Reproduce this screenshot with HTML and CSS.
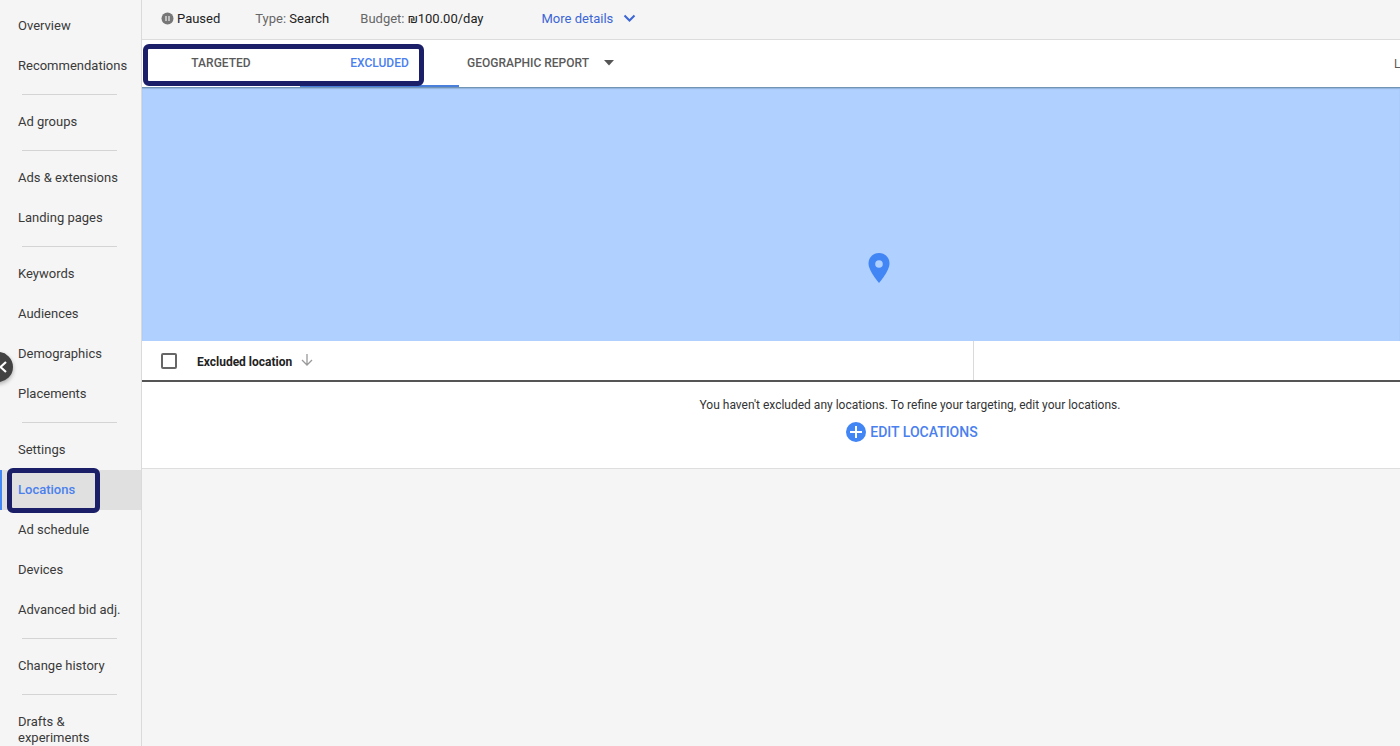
FILE: index.html
```html
<!DOCTYPE html>
<html lang="en">
<head>
<meta charset="utf-8">
<title>Locations</title>
<link rel="stylesheet" href="styles.css">
</head>
<body>
<div class="app">
  <nav class="sidebar" aria-label="Campaign">
    <a class="nav-item" href="#">Overview</a>
    <a class="nav-item" href="#">Recommendations</a>
    <hr class="rule">
    <a class="nav-item" href="#">Ad groups</a>
    <hr class="rule">
    <a class="nav-item" href="#">Ads &amp; extensions</a>
    <a class="nav-item" href="#">Landing pages</a>
    <hr class="rule">
    <a class="nav-item" href="#">Keywords</a>
    <a class="nav-item" href="#">Audiences</a>
    <a class="nav-item" href="#">Demographics</a>
    <a class="nav-item" href="#">Placements</a>
    <hr class="rule">
    <a class="nav-item" href="#">Settings</a>
    <a class="nav-item active" href="#" aria-current="page">Locations<span class="mark mark-nav"></span></a>
    <a class="nav-item" href="#">Ad schedule</a>
    <a class="nav-item" href="#">Devices</a>
    <a class="nav-item" href="#">Advanced bid adj.</a>
    <hr class="rule">
    <a class="nav-item" href="#">Change history</a>
    <hr class="rule">
    <a class="nav-item tall" href="#">Drafts &amp; experiments</a>
    <button class="collapse" type="button" aria-label="Collapse menu">
      <svg width="12" height="14" viewBox="0 0 12 14"><path d="M9 2 3.500 7 9 12" fill="none" stroke="#fff" stroke-width="2.200"/></svg>
    </button>
  </nav>
  <main class="main">
    <header class="status">
      <span class="paused">
        <svg width="13" height="13" viewBox="0 0 13 13"><circle cx="6.500" cy="6.500" r="6" fill="#777"/><path d="M5 4v5M8 4v5" stroke="#ddd" stroke-width="1.400"/></svg>
        Paused</span>
      <span class="type"><span class="label">Type:</span> Search</span>
      <span class="budget"><span class="label">Budget:</span> ₪100.00/day</span>
      <button class="more" type="button">More details
        <svg width="13" height="9" viewBox="0 0 13 9"><path d="m1.500 1.500 5 5 5-5" fill="none" stroke="#3b66d6" stroke-width="2"/></svg>
      </button>
    </header>
    <div class="tabs">
      <button class="tab" type="button">TARGETED</button>
      <button class="tab selected" type="button">EXCLUDED</button>
      <button class="tab report" type="button">GEOGRAPHIC REPORT
        <svg width="10" height="6" viewBox="0 0 10 6"><path d="M0 0h10L5 5.500z" fill="#555"/></svg>
      </button>
      <span class="level">L</span>
      <span class="mark mark-tabs"></span>
    </div>
    <section class="map" aria-label="Map">
      <svg width="22" height="30" viewBox="0 0 22 30"><path d="M11 0C4.900 0 .500 4.800.500 10.500.500 18 11 30 11 30s10.500-12 10.500-19.500C21.500 4.800 17.100 0 11 0z" fill="#4285f4"/><circle cx="11" cy="11" r="3.800" fill="#b0d0ff"/></svg>
    </section>
    <table class="grid">
      <thead>
        <tr>
          <th class="pick"><input type="checkbox" aria-label="Select all"></th>
          <th class="name">Excluded location
            <svg width="12" height="12" viewBox="0 0 12 12"><path d="M6 0v11M1 6l5 5 5-5" fill="none" stroke="#999" stroke-width="1.300"/></svg>
          </th>
          <th class="rest"></th>
        </tr>
      </thead>
      <tbody>
        <tr>
          <td colspan="3">
            <div class="empty">
              <p class="note">You haven't excluded any locations. To refine your targeting, edit your locations.</p>
              <button class="edit" type="button">
                <svg width="20" height="20" viewBox="0 0 20 20"><circle cx="10" cy="10" r="10" fill="#4285f4"/><path d="M10 4v12M4 10h12" stroke="#fff" stroke-width="2"/></svg>
                EDIT LOCATIONS</button>
            </div>
          </td>
        </tr>
      </tbody>
    </table>
  </main>
</div>
</body>
</html>
```
FILE: styles.css
```css
* { box-sizing: border-box; }
body {
  margin: 0;
  background: #f5f5f5;
  color: #333;
  font-family: Roboto, "Liberation Sans", sans-serif;
  font-size: 13px;
  overflow: hidden;
}
button { border: 0; margin: 0; padding: 0; background: none; font: inherit; color: inherit; cursor: pointer; }
svg { display: block; flex: none; }
.app { display: flex; height: 100vh; }

.sidebar {
  position: relative;
  flex: none;
  width: 142px;
  padding-top: 6px;
  border-right: 1px solid #dadada;
}
.nav-item {
  position: relative;
  display: flex;
  align-items: center;
  height: 40px;
  padding-left: 18px;
  line-height: 16px;
  color: #3a3a3a;
  text-decoration: none;
  white-space: nowrap;
}
.nav-item.tall { height: 56px; padding-right: 24px; white-space: normal; }
.nav-item.active {
  background: #e0e0e0;
  box-shadow: inset 2px 0 #4285f4;
  color: #4a80ee;
  font-weight: 500;
}
.rule { height: 1px; margin: 8px 24px 7px 22px; border: 0; background: #d4d4d4; }
.collapse {
  position: absolute;
  top: 352px;
  left: -17px;
  display: flex;
  align-items: center;
  justify-content: flex-end;
  width: 30px;
  height: 30px;
  padding-right: 4px;
  border-radius: 50%;
  background: #424242;
  box-shadow: 0 2px 4px rgba(0, 0, 0, .3);
}
.mark { position: absolute; border: 5px solid #1b1f68; border-radius: 6px; pointer-events: none; }
.mark-nav { top: -2px; left: 7px; width: 93px; height: 45px; }
.mark-tabs { top: 4px; left: 1px; width: 281px; height: 42px; }

.main { flex: 1; min-width: 0; }
.status {
  display: flex;
  align-items: center;
  height: 40px;
  padding: 0 19px 3px;
  border-bottom: 1px solid #dcdcdc;
  color: #222;
  white-space: nowrap;
}
.label { color: #666; }
.paused { display: flex; align-items: center; gap: 3px; margin-right: 35px; }
.type { margin-right: 31px; }
.budget { margin-right: 58px; }
.more { display: flex; align-items: center; gap: 10px; color: #3b66d6; }

.tabs {
  position: relative;
  display: flex;
  height: 48px;
  background: #fff;
  border-bottom: 1px solid #7095b5;
  font-size: 12px;
  font-weight: 500;
  color: #5a5a5a;
}
.tab { width: 158px; padding-bottom: 1px; }
.tab.selected { width: 159px; color: #4a80ee; box-shadow: inset 0 -2px #4a80dc; }
.tab.report { display: flex; align-items: center; gap: 15px; width: auto; padding-left: 8px; }
.level { display: flex; align-items: center; width: 6px; margin-left: auto; overflow: hidden; font-weight: 400; }

.map {
  display: flex;
  align-items: flex-start;
  justify-content: center;
  height: 253px;
  padding: 165px 0 0 216px;
  background: #b0d0ff;
  box-shadow: inset 0 1px 1px #93b4dc;
}

.grid { width: 100%; border-collapse: collapse; table-layout: fixed; background: #fff; font-size: 12px; }
.grid th { height: 40px; padding: 0; border-bottom: 2px solid #555; text-align: left; font-weight: 700; color: #222; }
.grid .pick { width: 55px; padding-left: 19px; }
.grid .name { width: 776px; padding-top: 2px; border-right: 1px solid #dadada; }
.name svg { display: inline-block; margin-left: 6px; }
.pick input {
  display: block;
  appearance: none;
  width: 16px;
  height: 16px;
  margin: 0;
  border: 2px solid #666;
  border-radius: 2px;
}
.grid td { padding: 0; border-bottom: 1px solid #dedede; }
.empty {
  display: flex;
  flex-direction: column;
  align-items: center;
  gap: 9px;
  height: 86px;
  padding: 15px 0 0 278px;
}
.note { margin: 0; line-height: 16px; }
.edit { display: flex; align-items: center; gap: 4px; margin-left: 4px; font-size: 14px; font-weight: 500; color: #4a80ee; }
```
